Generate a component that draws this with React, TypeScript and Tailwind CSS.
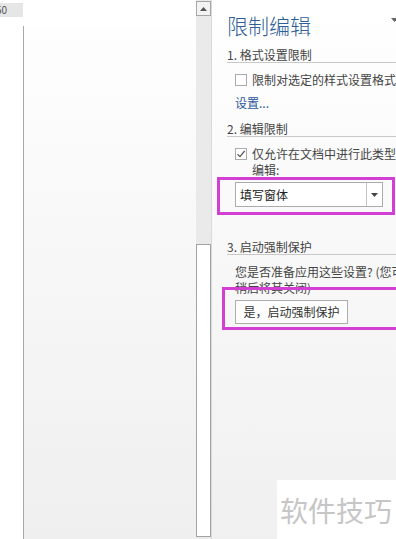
import React from "react";

function Checkbox({ checked }: { checked?: boolean }) {
  return (
    <span className="w-[12px] h-[12px] shrink-0 border border-[#ababab] bg-white flex items-center justify-center">
      {checked && (
        <svg width="10" height="10" viewBox="0 0 10 10">
          <path d="M1.5 5.2 L4 7.6 L8.6 2" fill="none" stroke="#555" strokeWidth="1.2" />
        </svg>
      )}
    </span>
  );
}

function SectionHeading({ children, className }: { children: React.ReactNode; className?: string }) {
  return (
    <div
      className={`w-[220px] text-[12px] leading-[14px] text-[#444] border-b border-[#c9c9c9] whitespace-nowrap ${className ?? ""}`}
    >
      {children}
    </div>
  );
}

export default function App() {
  return (
    <div className="relative w-[396px] h-[539px] flex overflow-hidden bg-white font-['Noto_Sans_CJK_SC','Noto_Sans',sans-serif]">
      {/* ruler strip */}
      <div className="w-[23px] shrink-0 bg-white">
        <div className="mt-[3px] h-[14px] w-[24px] bg-[#e6e6e6] overflow-hidden text-[10px] leading-[14px] text-[#555] whitespace-nowrap">
          <span className="-ml-[4px] inline-block">50</span>
        </div>
      </div>

      {/* document page area */}
      <div className="w-[173px] shrink-0 flex flex-col">
        <div className="h-[26px] bg-white" />
        <div className="flex-1 border-l border-[#a9a9a9] bg-gradient-to-b from-[#fefefe] to-[#efefef]" />
      </div>

      {/* scrollbar */}
      <div className="w-[15px] shrink-0 flex flex-col bg-[#eaeaea]">
        <div className="mt-[1px] h-[15px] border border-[#a6a6a6] bg-[#f3f3f3] flex items-center justify-center">
          <svg width="7" height="4" viewBox="0 0 7 4">
            <path d="M0 4 L3.5 0 L7 4 Z" fill="#555" />
          </svg>
        </div>
        <div className="flex-1" />
        <div className="h-[293px] mb-[2px] border border-[#a3a3a3] bg-white" />
      </div>

      {/* restrict editing pane */}
      <div className="relative flex-1 overflow-hidden border-l border-[#dadada] bg-gradient-to-b from-white to-[#f0f0f0] pl-[15px]">
        <div className="mt-[11px] h-[28px] w-[171px] flex justify-between">
          <span className="text-[21px] leading-[28px] font-light text-[#2f5d96] whitespace-nowrap">限制编辑</span>
          <svg className="mt-[7px]" width="7" height="4" viewBox="0 0 7 4">
            <path d="M0 0 L7 0 L3.5 4 Z" fill="#666" />
          </svg>
        </div>

        <SectionHeading className="mt-[9px]">1. 格式设置限制</SectionHeading>
        <div className="mt-[9px] ml-[8px] h-[16px] flex items-center gap-[5px] whitespace-nowrap text-[12px] leading-[16px] text-[#444]">
          <Checkbox />
          <span>限制对选定的样式设置格式</span>
        </div>
        <div className="mt-[7px] ml-[8px] text-[12px] leading-[16px] text-[#2b579a]">设置...</div>

        <SectionHeading className="mt-[11px]">2. 编辑限制</SectionHeading>
        <div className="mt-[9px] ml-[8px] h-[16px] flex items-center gap-[5px] whitespace-nowrap text-[12px] leading-[16px] text-[#444]">
          <Checkbox checked />
          <span>仅允许在文档中进行此类型的</span>
        </div>
        <div className="ml-[25px] text-[12px] leading-[15px] text-[#444]">编辑:</div>

        <div className="-ml-[10px] w-[178px] border-[3px] border-[#d23fd2] pl-[15px] pr-[9px] pt-[2px] pb-[5px]">
          <div className="h-[25px] flex border border-[#ababab] bg-white">
            <span className="flex-1 pl-[4px] text-[12px] leading-[23px] text-[#222]">填写窗体</span>
            <span className="w-[16px] border-l border-[#c4c4c4] flex items-center justify-center">
              <svg width="7" height="4" viewBox="0 0 7 4">
                <path d="M0 0 L7 0 L3.5 4 Z" fill="#444" />
              </svg>
            </span>
          </div>
        </div>

        <SectionHeading className="mt-[25px]">3. 启动强制保护</SectionHeading>
        <div className="mt-[9px] ml-[8px] text-[12px] leading-[16px] text-[#444] whitespace-nowrap">
          <div>您是否准备应用这些设置? (您可</div>
          <div>稍后将其关闭)</div>
        </div>
        <div className="relative -mt-[9px] -ml-[5px] w-[200px] border-[3px] border-[#d23fd2] pl-[10px] pt-[8px] pb-[3px]">
          <button className="h-[24px] w-[113px] border border-[#adadad] bg-[#fdfdfd] text-[12px] leading-[22px] text-[#333]">
            是，启动强制保护
          </button>
        </div>
      </div>

      {/* watermark */}
      <div className="absolute left-[277px] top-[480px] w-[119px] h-[59px] bg-white pl-[3px] flex items-center">
        <span className="text-[28px] leading-[32px] text-[#c6c6c6] whitespace-nowrap">软件技巧</span>
      </div>
    </div>
  );
}
